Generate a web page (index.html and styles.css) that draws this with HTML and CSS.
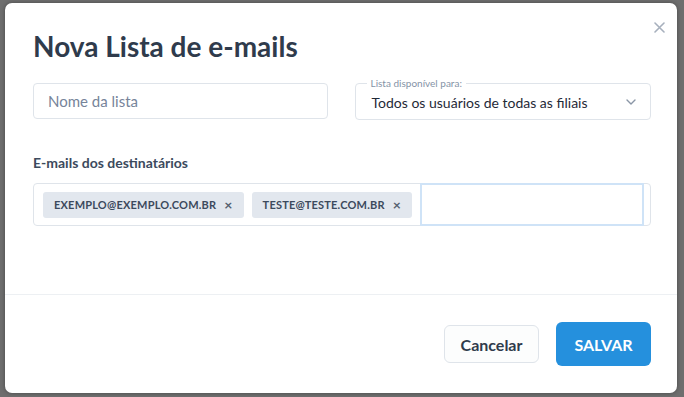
FILE: index.html
```html
<!DOCTYPE html>
<html lang="pt-BR">
<head>
    <meta charset="UTF-8">
    <meta name="viewport" content="width=device-width, initial-scale=1.0">
    <title>Nova Lista de e-mails</title>
    <link rel="stylesheet" href="styles.css">
</head>
<body>
    <div class="backdrop">
        <div class="modal">
            <button class="close" aria-label="Fechar">
                <svg width="11" height="11" viewBox="0 0 11 11"><path d="M1 1L10 10M10 1L1 10" stroke="currentColor" stroke-width="1.6" stroke-linecap="round"/></svg>
            </button>
            <div class="modal-body">
                <h1>Nova Lista de e-mails</h1>
                <div class="row">
                    <input type="text" class="field" placeholder="Nome da lista">
                    <div class="select">
                        <span class="legend">Lista disponível para:</span>
                        <span class="select-value">Todos os usuários de todas as filiais</span>
                        <svg class="chevron" width="10" height="6" viewBox="0 0 10 6"><path d="M1 1L5 5L9 1" fill="none" stroke="currentColor" stroke-width="1.4" stroke-linecap="round" stroke-linejoin="round"/></svg>
                    </div>
                </div>
                <p class="label">E-mails dos destinatários</p>
                <div class="tags">
                    <span class="tag">EXEMPLO@EXEMPLO.COM.BR <span class="tag-x">×</span></span>
                    <span class="tag">TESTE@TESTE.COM.BR <span class="tag-x">×</span></span>
                    <input type="text" class="tag-input">
                </div>
            </div>
            <div class="modal-footer">
                <button class="btn btn-cancel">Cancelar</button>
                <button class="btn btn-save">SALVAR</button>
            </div>
        </div>
    </div>
</body>
</html>
```

FILE: styles.css
```css
* {
    box-sizing: border-box;
}
body {
    margin: 0;
    font-family: Lato, "Noto Sans", sans-serif;
    background-color: #6e6e6e;
}
.backdrop {
    height: 397px;
    padding: 3px 7px 4px 5px;
}
.modal {
    position: relative;
    height: 100%;
    background-color: #fff;
    border-radius: 7px;
    box-shadow: 0 0 4px rgba(0, 0, 0, 0.35);
    display: flex;
    flex-direction: column;
}
.close {
    position: absolute;
    top: 18px;
    right: 12px;
    background: none;
    border: none;
    padding: 0;
    color: #a7b0bd;
    cursor: pointer;
}
.modal-body {
    padding: 27px 26px 0 28px;
    height: 292px;
    border-bottom: 1px solid #edf0f3;
}
h1 {
    margin: 0 0 20px;
    font-size: 28px;
    font-weight: 700;
    color: #2f3b4c;
    line-height: 33px;
}
.row {
    display: flex;
    gap: 27px;
}
.field {
    flex: 1;
    height: 36px;
    border: 1px solid #dfe4ea;
    border-radius: 4px;
    padding: 0 14px;
    font-family: inherit;
    font-size: 15px;
    color: #2f3b4c;
}
.field::placeholder {
    color: #76849a;
}
.select {
    position: relative;
    flex: 1;
    height: 37px;
    border: 1px solid #dfe4ea;
    border-radius: 4px;
    display: flex;
    align-items: center;
    padding: 0 14px 0 16px;
}
.legend {
    position: absolute;
    top: -7px;
    left: 11px;
    padding: 0 4px;
    background-color: #fff;
    font-size: 10px;
    line-height: 12px;
    color: #8593a6;
}
.select-value {
    flex: 1;
    font-size: 14px;
    color: #1f2937;
    padding-top: 1px;
}
.chevron {
    color: #8a96a6;
}
.label {
    margin: 34px 0 12px;
    font-size: 14px;
    font-weight: 700;
    color: #3c4a5d;
}
.tags {
    display: flex;
    align-items: center;
    gap: 8px;
    height: 43px;
    border: 1px solid #dfe4ea;
    border-radius: 4px;
    padding: 0 6px 0 9px;
}
.tag {
    display: flex;
    align-items: center;
    height: 26px;
    padding: 0 11px;
    background-color: #e2e7ee;
    border-radius: 3px;
    font-size: 11px;
    font-weight: 700;
    color: #3c4a5d;
    letter-spacing: 0.2px;
}
.tag-x {
    margin-left: 8px;
    font-size: 14px;
    color: #55606f;
}
.tag-input {
    flex: 1;
    align-self: stretch;
    margin: -1px 0;
    border: 2px solid #cfe3f7;
    outline: none;
}
.modal-footer {
    flex: 1;
    display: flex;
    align-items: center;
    justify-content: flex-end;
    gap: 17px;
    padding: 0 26px 0 0;
}
.btn {
    font-family: inherit;
    font-size: 16px;
    font-weight: 700;
    border-radius: 6px;
    cursor: pointer;
}
.btn-cancel {
    width: 95px;
    height: 38px;
    background-color: #fcfdfd;
    border: 1px solid #dfe4ea;
    color: #2f3b4c;
}
.btn-save {
    width: 95px;
    height: 44px;
    background-color: #2590dd;
    border: none;
    color: #fff;
}
```
